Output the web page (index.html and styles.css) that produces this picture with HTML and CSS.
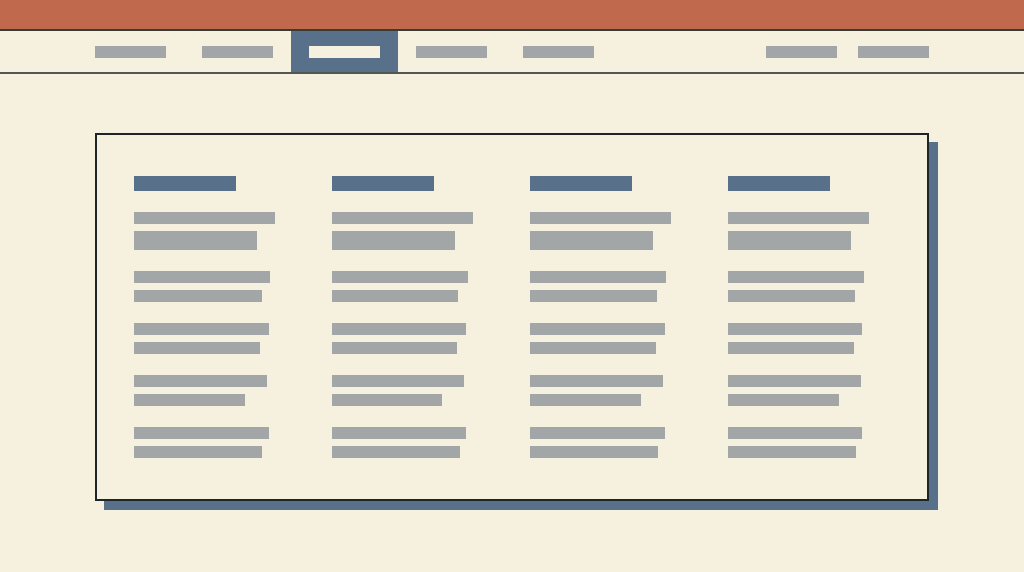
FILE: index.html
```html
<!DOCTYPE html>
<html>
<head>
<meta charset="utf-8">
<link rel="stylesheet" href="styles.css">
</head>
<body>
<div class="topbar"></div>
<nav class="nav">
  <div class="nav-left">
    <div class="tab"><span class="bar"></span></div>
    <div class="tab"><span class="bar"></span></div>
    <div class="tab active"><span class="bar"></span></div>
    <div class="tab"><span class="bar"></span></div>
    <div class="tab"><span class="bar"></span></div>
  </div>
  <div class="nav-right">
    <span class="bar"></span>
    <span class="bar"></span>
  </div>
</nav>
<main class="main">
  <section class="card">
    <div class="col">
      <div class="head"></div>
      <div class="groups">
        <div class="group first"><span class="line" style="width:141px"></span><span class="line thick" style="width:123px"></span></div>
        <div class="group"><span class="line" style="width:136px"></span><span class="line" style="width:128px"></span></div>
        <div class="group"><span class="line" style="width:135px"></span><span class="line" style="width:126px"></span></div>
        <div class="group"><span class="line" style="width:133px"></span><span class="line" style="width:111px"></span></div>
        <div class="group"><span class="line" style="width:135px"></span><span class="line" style="width:128px"></span></div>
      </div>
    </div>
    <div class="col">
      <div class="head"></div>
      <div class="groups">
        <div class="group first"><span class="line" style="width:141px"></span><span class="line thick" style="width:123px"></span></div>
        <div class="group"><span class="line" style="width:136px"></span><span class="line" style="width:126px"></span></div>
        <div class="group"><span class="line" style="width:134px"></span><span class="line" style="width:125px"></span></div>
        <div class="group"><span class="line" style="width:132px"></span><span class="line" style="width:110px"></span></div>
        <div class="group"><span class="line" style="width:134px"></span><span class="line" style="width:128px"></span></div>
      </div>
    </div>
    <div class="col">
      <div class="head"></div>
      <div class="groups">
        <div class="group first"><span class="line" style="width:141px"></span><span class="line thick" style="width:123px"></span></div>
        <div class="group"><span class="line" style="width:136px"></span><span class="line" style="width:127px"></span></div>
        <div class="group"><span class="line" style="width:135px"></span><span class="line" style="width:126px"></span></div>
        <div class="group"><span class="line" style="width:133px"></span><span class="line" style="width:111px"></span></div>
        <div class="group"><span class="line" style="width:135px"></span><span class="line" style="width:128px"></span></div>
      </div>
    </div>
    <div class="col">
      <div class="head"></div>
      <div class="groups">
        <div class="group first"><span class="line" style="width:141px"></span><span class="line thick" style="width:123px"></span></div>
        <div class="group"><span class="line" style="width:136px"></span><span class="line" style="width:127px"></span></div>
        <div class="group"><span class="line" style="width:134px"></span><span class="line" style="width:126px"></span></div>
        <div class="group"><span class="line" style="width:133px"></span><span class="line" style="width:111px"></span></div>
        <div class="group"><span class="line" style="width:134px"></span><span class="line" style="width:128px"></span></div>
      </div>
    </div>
  </section>
</main>
</body>
</html>
```

FILE: styles.css
```css
html, body {
  margin: 0;
  padding: 0;
  background: #f6f0df;
  font-family: "Liberation Sans", Arial, sans-serif;
  width: 1024px;
  height: 572px;
  overflow: hidden;
}

.topbar {
  height: 29px;
  background: #c1694c;
  border-bottom: 2px solid #3a3a36;
}

.nav {
  height: 41px;
  display: flex;
  justify-content: space-between;
  border-bottom: 2px solid #4f5851;
  padding: 0 95px 0 77px;
}

.nav-left {
  display: flex;
}

.tab {
  width: 107px;
  display: flex;
  align-items: center;
  justify-content: center;
}

.tab.active {
  background: #587089;
}

.bar {
  display: block;
  width: 71px;
  height: 12px;
  background: #a3a6a8;
}

.tab.active .bar {
  background: #f6f0df;
}

.nav-right {
  display: flex;
  align-items: center;
  gap: 21px;
}

.main {
  padding: 59px 0 0 95px;
}

.card {
  box-sizing: border-box;
  width: 834px;
  height: 368px;
  border: 2px solid #1e2528;
  box-shadow: 9px 9px 0 #587089;
  padding: 41px 0 0 37px;
  display: grid;
  grid-template-columns: repeat(4, 141px);
  column-gap: 57px;
  align-content: start;
}

.head {
  width: 102px;
  height: 15px;
  background: #587089;
}

.groups {
  margin-top: 21px;
  display: flex;
  flex-direction: column;
  gap: 21px;
}

.group {
  display: flex;
  flex-direction: column;
  gap: 7px;
}

.line {
  display: block;
  height: 12px;
  background: #a3a6a7;
}

.line.thick {
  height: 19px;
}
```
